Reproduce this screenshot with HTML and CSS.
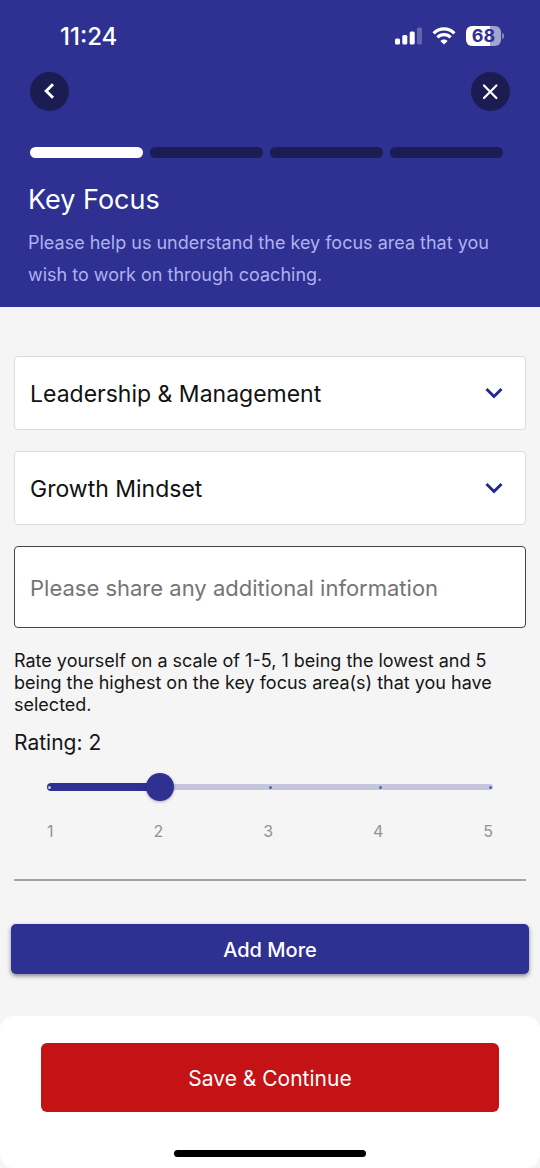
FILE: index.html
```html
<!DOCTYPE html>
<html lang="en">
<head>
<meta charset="utf-8">
<meta name="viewport" content="width=device-width, initial-scale=1">
<title>Key Focus</title>
<link rel="stylesheet" href="styles.css">
</head>
<body>
<header class="header">
  <div class="status">
    <span class="time">11:24</span>
    <div class="status-icons">
      <svg width="27" height="18" viewBox="0 0 27 18" fill="#fff" aria-hidden="true">
        <rect x="0" y="11.500" width="5" height="6" rx="1.5"/>
        <rect x="7.3" y="8" width="5" height="9.5" rx="1.5"/>
        <rect x="14.7" y="4.500" width="5" height="13" rx="1.5"/>
        <rect x="22" y="0.500" width="5" height="17" rx="1.5" opacity=".25"/>
      </svg>
      <svg width="24" height="18" viewBox="0 0 24 18" fill="none" stroke="#fff" stroke-width="3.2" aria-hidden="true">
        <path d="M1.6 6.3C7.4.5 16.600 .5 22.400 6.300"/>
        <path d="M5.400 10.300C9.100 6.700 14.900 6.700 18.600 10.300"/>
        <path d="M12 17.500L8.400 13.900C10.500 12 13.500 12 15.600 13.900Z" fill="#fff" stroke="none"/>
      </svg>
      <div class="battery"><span class="battery-level">68</span><span class="battery-tip"></span></div>
    </div>
  </div>
  <nav class="nav">
    <button class="round" type="button" aria-label="Back">
      <svg width="39" height="39" viewBox="0 0 39 39" fill="none" stroke="#fff" stroke-width="2.900" aria-hidden="true"><path d="M23 12.200L16.200 19L23 25.800"/></svg>
    </button>
    <button class="round" type="button" aria-label="Close">
      <svg width="39" height="39" viewBox="0 0 39 39" fill="none" stroke="#fff" stroke-width="2.200" stroke-linecap="round" aria-hidden="true"><path d="M13 13.500L25.400 26M25.400 13.500L13 26"/></svg>
    </button>
  </nav>
  <div class="steps" role="img" aria-label="Step 1 of 4">
    <span class="step step-active"></span><span class="step"></span><span class="step"></span><span class="step"></span>
  </div>
  <h1 class="title">Key Focus</h1>
  <p class="intro">Please help us understand the key focus area that you wish to work on through coaching.</p>
</header>
<main class="form">
  <select class="field select" aria-label="Focus area">
    <option>Leadership &amp; Management</option>
  </select>
  <select class="field select" aria-label="Focus topic">
    <option>Growth Mindset</option>
  </select>
  <input class="field info" type="text" aria-label="Additional information" placeholder="Please share any additional information">
  <p class="hint">Rate yourself on a scale of 1-5, 1 being the lowest and 5 being the highest on the key focus area(s) that you have selected.</p>
  <label class="rating" for="rating">Rating: 2</label>
  <div class="slider">
    <div class="track">
      <span class="track-fill"></span>
      <span class="track-rest"></span>
    </div>
    <div class="ticks"><i class="tick tick-on"></i><i class="tick"></i><i class="tick"></i><i class="tick"></i><i class="tick"></i></div>
    <input class="range" id="rating" type="range" min="1" max="5" step="1" value="2">
  </div>
  <div class="scale"><span>1</span><span>2</span><span>3</span><span>4</span><span>5</span></div>
  <hr class="rule">
  <button class="add" type="button">Add More</button>
</main>
<footer class="footer">
  <button class="save" type="submit">Save &amp; Continue</button>
  <span class="home"></span>
</footer>
</body>
</html>
```
FILE: styles.css
```css
* { box-sizing: border-box; }

body {
  margin: 0;
  min-height: 100vh;
  display: flex;
  flex-direction: column;
  background: #f5f5f5;
  color: #161616;
  font-family: Inter, Roboto, sans-serif;
}

button, input, select { font-family: inherit; }
button { border: 0; padding: 0; cursor: pointer; }

.header {
  background: #2e3092;
  color: #fff;
  padding: 20px 28px 16px;
}

.status {
  display: flex;
  justify-content: space-between;
  align-items: center;
  height: 32px;
  padding: 0 8px 0 32px;
}
.time { font-size: 24px; font-weight: 500; }
.status-icons { display: flex; align-items: center; gap: 10px; }
.battery { display: flex; align-items: center; gap: 1px; }
.battery-level {
  width: 35px;
  height: 20px;
  border-radius: 6px;
  background: linear-gradient(90deg, #fff 68%, #a3a4d0 68%);
  color: #2e3092;
  font-size: 18px;
  font-weight: 700;
  line-height: 20px;
  text-align: center;
}
.battery-tip {
  width: 2px;
  height: 6px;
  border-radius: 0 2px 2px 0;
  background: #8384bd;
}

.nav {
  display: flex;
  justify-content: space-between;
  margin-top: 20px;
  padding: 0 2px;
}
.round {
  width: 39px;
  height: 39px;
  border-radius: 50%;
  background: #1b1d52;
}
.round svg { display: block; }

.steps { display: flex; gap: 7px; margin: 36px 9px 0 2px; }
.step { flex: 1; height: 11px; border-radius: 6px; background: #1b1d52; }
.step-active { background: #fff; }

.title {
  margin: 26px 0 0;
  font-size: 27px;
  font-weight: 400;
  line-height: 32px;
}
.intro {
  margin: 11px 0 0;
  color: #b0b1f0;
  font-size: 18px;
  line-height: 32px;
}

.form {
  flex: 1;
  display: flex;
  flex-direction: column;
  padding: 49px 14px 42px;
}
.field {
  width: 100%;
  margin: 0 0 21px;
  padding: 2px 15px 0;
  border: 1px solid #dcdcdc;
  border-radius: 4px;
  background-color: #fff;
  color: #111;
  font-size: 23px;
}
.select {
  height: 74px;
  appearance: none;
  background-image: url("data:image/svg+xml,%3Csvg xmlns='http://www.w3.org/2000/svg' width='18' height='12' fill='none' stroke='%2323278f' stroke-width='2.900'%3E%3Cpath d='M1.500 2L9 9.500L16.500 2'/%3E%3C/svg%3E");
  background-repeat: no-repeat;
  background-position: right 22px center;
}
.info { height: 82px; border-color: #444; font-size: 22px; }
.info::placeholder { color: #757575; }

.hint { margin: 1px 0 0; font-size: 18px; line-height: 22px; }
.rating { margin-top: 14px; font-size: 21px; line-height: 26px; }

.slider { display: grid; align-items: center; margin: 17px 22px 0; }
.slider > * { grid-area: 1 / 1; }
.track { display: flex; align-items: center; margin: 0 11px; }
.track-fill {
  flex: 1;
  height: 8px;
  border-radius: 4px 0 0 4px;
  background: #2e3092;
}
.track-rest {
  flex: 3;
  height: 6px;
  border-radius: 0 3px 3px 0;
  background: #c5c5de;
}
.ticks { display: flex; justify-content: space-between; margin: 0 12px; }
.tick { width: 3px; height: 3px; border-radius: 50%; background: #5c5dae; }
.tick-on { background: #c5c5de; }
.range {
  width: 100%;
  height: 28px;
  margin: 0;
  appearance: none;
  background: transparent;
}
.range::-webkit-slider-thumb {
  appearance: none;
  width: 28px;
  height: 28px;
  border-radius: 50%;
  background: #2e3092;
  box-shadow: 0 1px 3px rgba(0, 0, 0, .3);
}

.scale {
  display: flex;
  justify-content: space-between;
  margin: 20px 33px 0;
  color: #929292;
  font-size: 16px;
  line-height: 20px;
}
.rule {
  width: 100%;
  height: 2px;
  margin: 38px 0 0;
  border: 0;
  background: #a3a3a3;
}
.add {
  height: 50px;
  margin: 43px -3px 0;
  padding-top: 2px;
  border-radius: 5px;
  background: #2e3092;
  color: #fff;
  font-size: 20px;
  font-weight: 500;
  box-shadow: 0 2px 4px rgba(20, 20, 60, .5);
}

.footer {
  display: flex;
  flex-direction: column;
  align-items: center;
  padding: 27px 41px 11px;
  border-radius: 14px;
  background: #fff;
}
.save {
  width: 100%;
  height: 69px;
  padding-top: 2px;
  border-radius: 6px;
  background: #c41215;
  color: #fff;
  font-size: 21px;
}
.home {
  width: 42%;
  height: 7px;
  margin-top: 38px;
  border-radius: 4px;
  background: #000;
}
```
